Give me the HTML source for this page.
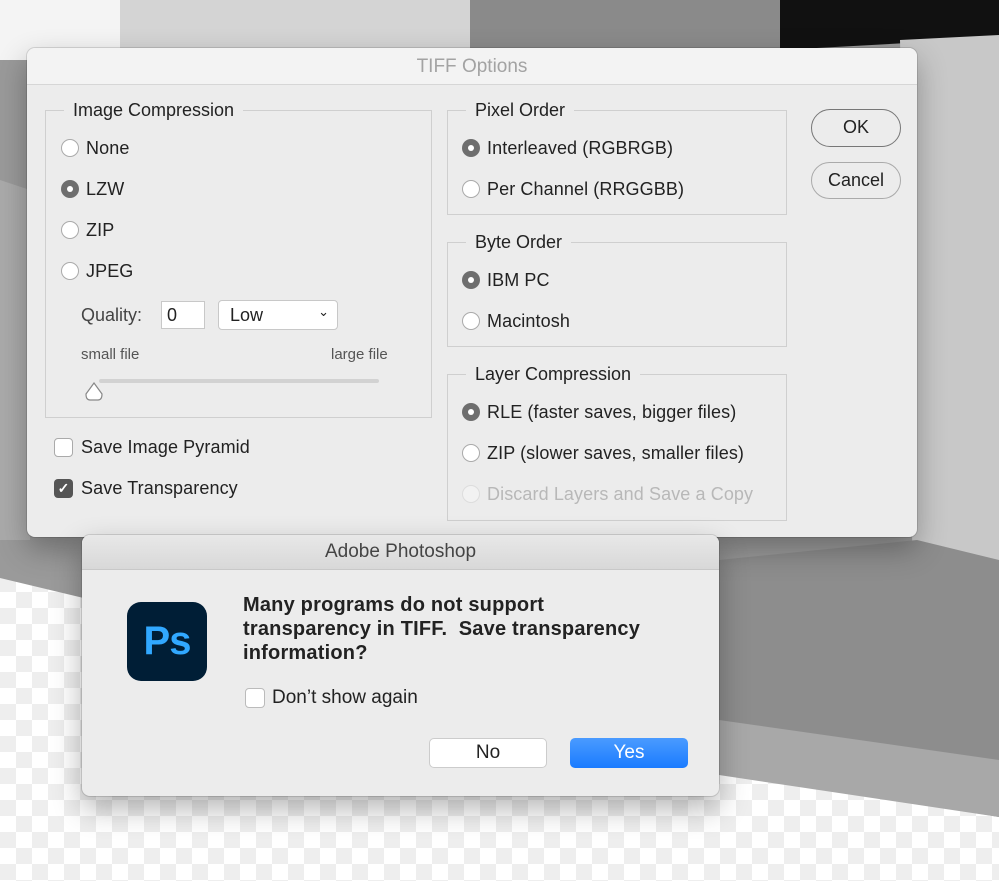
<!DOCTYPE html>
<html><head><meta charset="utf-8"><style>
*{box-sizing:border-box;margin:0;padding:0}
body{width:999px;height:881px;position:relative;overflow:hidden;font-family:"Liberation Sans",sans-serif;color:#222;
background:repeating-conic-gradient(#ffffff 0 25%,#eeeeee 0 50%) 0 0/32px 32px}
.abs{position:absolute}
.dlg{position:absolute;background:#ececec;border-radius:8px;box-shadow:0 12px 30px rgba(0,0,0,.3),0 0 0 1px rgba(0,0,0,.12)}
.grp{position:absolute;border:1px solid #cfcfcf}
.leg{position:absolute;top:-12px;left:18px;background:#ececec;padding:0 9px;font-size:18px;line-height:22px;color:#222}
.r{position:absolute;font-size:18px;line-height:20px;padding-left:25px;letter-spacing:.1px;white-space:nowrap}
.r:before{content:"";position:absolute;left:0;top:1px;width:18px;height:18px;border-radius:50%;background:#fff;border:1px solid #aaa;box-sizing:border-box}
.r.on:before{background:#6e6e6e;border:none}
.r.on:after{content:"";position:absolute;left:6px;top:7px;width:6px;height:6px;border-radius:50%;background:#fff}
.r.dis{color:#b8b8b8}.r.dis:before{border-color:#ddd;background:#f2f2f2}
.btn{position:absolute;border:1.5px solid #777;border-radius:20px;font-size:18px;text-align:center;background:#ececec}
</style></head><body>
<svg class="abs" style="left:0;top:0" width="999" height="881">
<polygon points="0,0 999,0 999,817 0,578" fill="#9a9a9a"/>
<rect x="0" y="0" width="260" height="60" fill="#f4f4f4"/>
<polygon points="120,0 470,0 480,60 120,60" fill="#d4d4d4"/>
<polygon points="470,0 780,0 790,60 470,60" fill="#8a8a8a"/>
<polygon points="780,0 999,0 999,38 780,50" fill="#111"/>
<polygon points="900,40 999,35 999,760 917,740" fill="#c8c8c8"/>
<polygon points="0,180 30,190 30,540 0,540" fill="#aaa"/>
<polygon points="719,560 917,540 999,560 999,817 719,770" fill="#8d8d8d"/>
<polygon points="719,720 999,760 999,817 719,775" fill="#a8a8a8"/>
</svg>
<div class="dlg" style="left:27px;top:48px;width:890px;height:489px">
 <div class="abs" style="left:0;top:0;width:890px;height:37px;border-bottom:1px solid #d6d6d6;background:#f3f3f3;border-radius:8px 8px 0 0;text-align:center;font-size:19px;line-height:37px;color:#a3a3a3">TIFF Options</div>
 <div class="grp" style="left:18px;top:62px;width:387px;height:308px"><div class="leg">Image Compression</div>
  <div class="r" style="left:15px;top:27px">None</div>
  <div class="r on" style="left:15px;top:68px">LZW</div>
  <div class="r" style="left:15px;top:109px">ZIP</div>
  <div class="r" style="left:15px;top:150px">JPEG</div>
  <div class="abs" style="left:35px;top:194px;font-size:18px;color:#444">Quality:</div>
  <div class="abs" style="left:115px;top:190px;width:44px;height:28px;background:#fff;border:1px solid #c8c8c8;font-size:18px;padding:3px 5px">0</div>
  <div class="abs" style="left:172px;top:189px;width:120px;height:30px;background:#fff;border:1px solid #c8c8c8;border-radius:4px;font-size:18px;padding:4px 11px">Low<span style="position:absolute;right:8px;top:3px;font-size:13px">⌄</span></div>
  <div class="abs" style="left:35px;top:235px;font-size:15px;color:#555">small file</div>
  <div class="abs" style="left:285px;top:235px;font-size:15px;color:#555">large file</div>
  <div class="abs" style="left:53px;top:268px;width:280px;height:4px;background:#d2d2d2;border-radius:2px"></div>
  <svg class="abs" style="left:38px;top:271px" width="20" height="20"><path d="M10 1 L18 12 Q18 18 14 18 L6 18 Q2 18 2 12 Z" fill="#fff" stroke="#888" stroke-width="1.2"/></svg>
 </div>
 <div class="abs" style="left:27px;top:390px;width:19px;height:19px;border:1px solid #aaa;border-radius:4px;background:#fff"></div>
 <div class="abs" style="left:54px;top:389px;font-size:18px;letter-spacing:.1px">Save Image Pyramid</div>
 <div class="abs" style="left:27px;top:431px;width:19px;height:19px;border-radius:4px;background:#555;color:#fff;font-size:14px;text-align:center;line-height:19px;font-weight:bold">✓</div>
 <div class="abs" style="left:54px;top:430px;font-size:18px;letter-spacing:.1px">Save Transparency</div>
 <div class="grp" style="left:420px;top:62px;width:340px;height:105px"><div class="leg">Pixel Order</div>
  <div class="r on" style="left:14px;top:27px">Interleaved (RGBRGB)</div>
  <div class="r" style="left:14px;top:68px">Per Channel (RRGGBB)</div></div>
 <div class="grp" style="left:420px;top:194px;width:340px;height:105px"><div class="leg">Byte Order</div>
  <div class="r on" style="left:14px;top:27px">IBM PC</div>
  <div class="r" style="left:14px;top:68px">Macintosh</div></div>
 <div class="grp" style="left:420px;top:326px;width:340px;height:147px"><div class="leg">Layer Compression</div>
  <div class="r on" style="left:14px;top:27px">RLE (faster saves, bigger files)</div>
  <div class="r" style="left:14px;top:68px">ZIP (slower saves, smaller files)</div>
  <div class="r dis" style="left:14px;top:109px">Discard Layers and Save a Copy</div></div>
 <div class="btn" style="left:784px;top:61px;width:90px;height:38px;line-height:35px">OK</div>
 <div class="btn" style="left:784px;top:114px;width:90px;height:37px;line-height:34px;border-color:#aaa">Cancel</div>
</div>
<div class="dlg" style="left:82px;top:535px;width:637px;height:261px">
 <div class="abs" style="left:0;top:0;width:637px;height:35px;border-bottom:1px solid #c8c8c8;background:linear-gradient(#e8e8e8,#d8d8d8);border-radius:8px 8px 0 0;text-align:center;font-size:19px;line-height:34px;color:#444">Adobe Photoshop</div>
 <div class="abs" style="left:45px;top:67px;width:80px;height:79px;border-radius:14px;background:#001e36;color:#31a8ff;font-size:40px;font-weight:bold;text-align:center;line-height:79px;letter-spacing:-1px">Ps</div>
 <div class="abs" style="left:161px;top:58px;font-size:20px;line-height:24px;font-weight:bold;color:#222;white-space:nowrap;letter-spacing:.2px">Many programs do not support<br>transparency in TIFF.&nbsp; Save transparency<br>information?</div>
 <div class="abs" style="left:163px;top:153px;width:20px;height:20px;border:1px solid #bbb;border-radius:4px;background:#fff"></div>
 <div class="abs" style="left:190px;top:152px;font-size:19px">Don’t show again</div>
 <div class="abs" style="left:347px;top:203px;width:118px;height:30px;background:#fff;border:1px solid #ccc;border-radius:5px;text-align:center;font-size:19px;line-height:28px">No</div>
 <div class="abs" style="left:488px;top:203px;width:118px;height:30px;background:linear-gradient(#4a9bff,#1a7bff);border-radius:5px;text-align:center;font-size:19px;line-height:30px;color:#fff">Yes</div>
</div>
</body></html>
